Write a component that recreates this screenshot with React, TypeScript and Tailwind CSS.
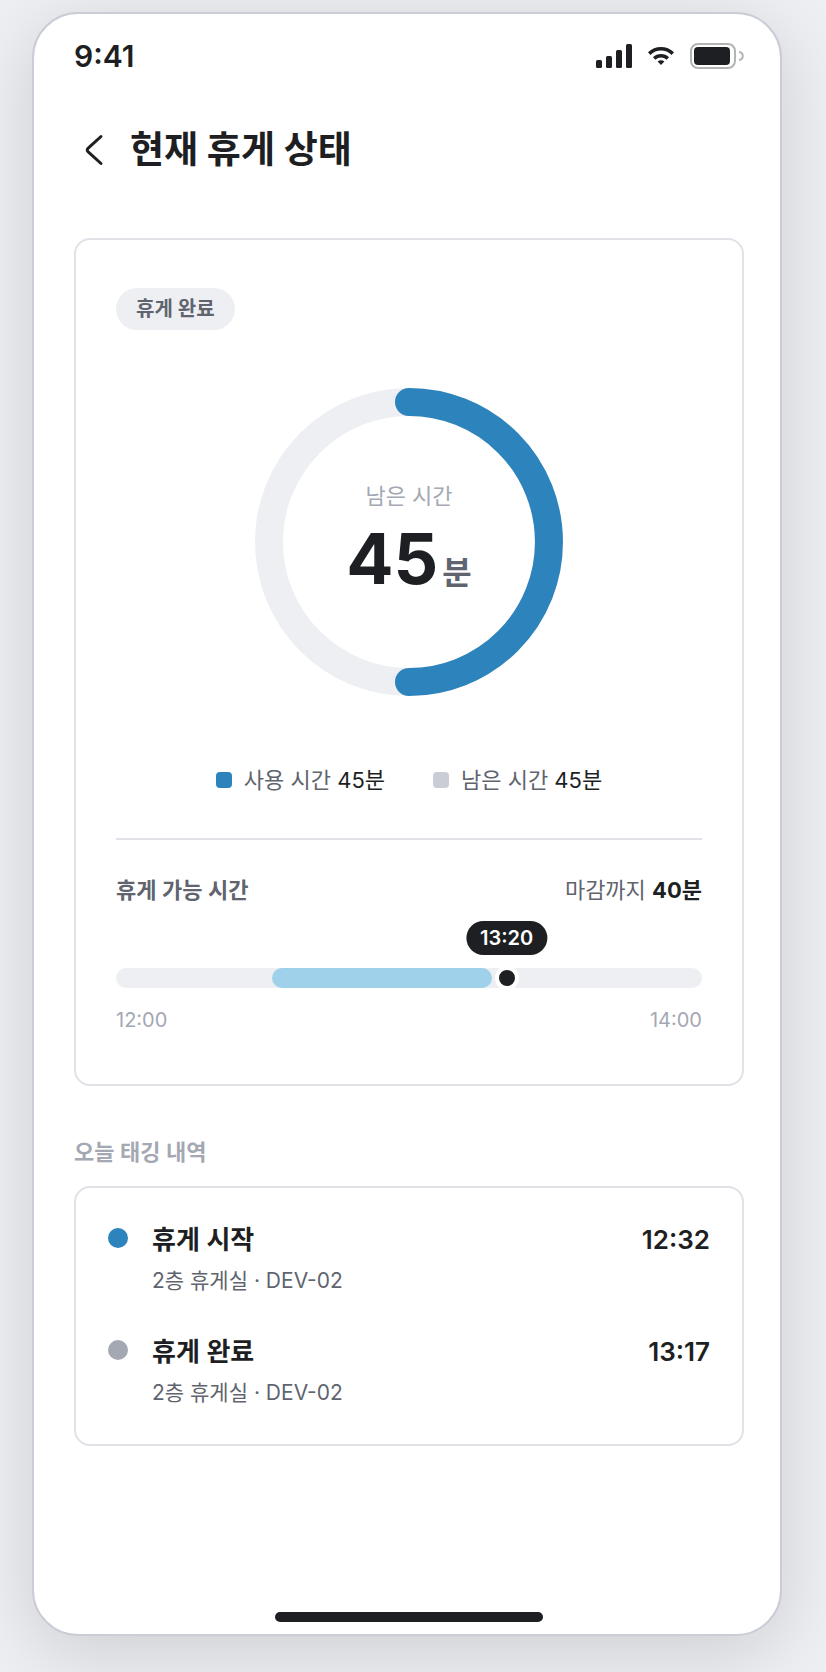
import React from 'react';

interface TagLog {
  label: string;
  place: string;
  time: string;
  dot: string;
}

const logs: TagLog[] = [
  { label: '휴게 시작', place: '2층 휴게실 · DEV-02', time: '12:32', dot: 'bg-[#2d83bc]' },
  { label: '휴게 완료', place: '2층 휴게실 · DEV-02', time: '13:17', dot: 'bg-[#a4a8b2]' },
];

// Minutes counted from 12:00 to 14:00
const windowMinutes = 120;
const usedFrom = 32;
const usedTo = 77;
const now = 80;

const percent = (minutes: number) => `${(minutes / windowMinutes) * 100}%`;

const StatusBar = () => (
  <div className="flex items-center justify-between h-[84px] pl-10 pr-9">
    <span className="text-[30px] leading-9 font-semibold">9:41</span>
    <div className="flex items-center gap-4">
      <svg width="36" height="24" viewBox="0 0 36 24" fill="currentColor" aria-hidden="true">
        <rect x="0" y="16" width="6" height="8" rx="1.5" />
        <rect x="10" y="12" width="6" height="12" rx="1.5" />
        <rect x="20" y="6" width="6" height="18" rx="1.5" />
        <rect x="30" y="0" width="6" height="24" rx="1.5" />
      </svg>
      <svg width="26" height="18" viewBox="0 0 26 18" fill="none" stroke="currentColor" strokeWidth="3.6" aria-hidden="true">
        <path d="M1.2 6.6C8 .2 18 .2 24.8 6.6" />
        <path d="M6.2 11.5C10 7.9 16 7.9 19.8 11.5" />
        <path d="M9.6 14.5C11.5 12.8 14.5 12.8 16.4 14.5L13 18Z" fill="currentColor" stroke="none" />
      </svg>
      <svg width="54" height="26" viewBox="0 0 54 26" fill="none" aria-hidden="true">
        <rect x="1" y="1" width="44" height="24" rx="7" stroke="#b4b4b6" strokeWidth="2" />
        <rect x="4" y="4" width="36" height="18" rx="4" fill="currentColor" />
        <path d="M49 9C54 9.5 54 16.5 49 17" stroke="#b4b4b6" strokeWidth="2" />
      </svg>
    </div>
  </div>
);

const BreakRing = () => (
  <div className="grid place-items-center mt-[58px]">
    <svg
      width="308"
      height="308"
      viewBox="0 0 308 308"
      fill="none"
      strokeWidth="28"
      className="col-start-1 row-start-1"
      aria-hidden="true"
    >
      <circle cx="154" cy="154" r="140" stroke="#eeeff3" />
      <path d="M154 14A140 140 0 0 1 154 294" stroke="#2d83bc" strokeLinecap="round" />
    </svg>
    <div className="col-start-1 row-start-1 pt-4 text-center">
      <p className="text-[22px] leading-8 text-[#a4a8b2]">남은 시간</p>
      <p className="flex items-baseline justify-center gap-1 leading-[94px]">
        <strong className="text-[70px] font-bold">45</strong>
        <span className="text-[32px] font-semibold text-[#5f646e]">분</span>
      </p>
    </div>
  </div>
);

const LegendItem = ({ color, label, value }: { color: string; label: string; value: string }) => (
  <li className="flex items-center gap-3">
    <span className={`size-4 rounded ${color}`} />
    <span className="text-[#5f646e]">
      {label} <span className="text-[#1e1f23]">{value}</span>
    </span>
  </li>
);

const Timeline = () => (
  <div className="pt-8">
    <div className="flex items-center justify-between text-[22px] leading-9">
      <h2 className="font-semibold text-[#5f646e]">휴게 가능 시간</h2>
      <p className="text-[#5f646e]">
        마감까지 <strong className="font-bold text-[#1e1f23]">40분</strong>
      </p>
    </div>

    <div className="relative mt-[60px] h-5 rounded-full bg-[#eeeff3]">
      <div
        className="absolute inset-y-0 rounded-full bg-[#9fd1ea]"
        style={{ left: percent(usedFrom), width: percent(usedTo - usedFrom) }}
      />
      {/* Current time marker */}
      <div className="absolute inset-y-0 flex items-center" style={{ left: percent(now) }}>
        <span className="size-6 -translate-x-1/2 rounded-full border-4 border-white bg-[#1e1f23]" />
        <span className="absolute bottom-full left-0 -translate-x-1/2 mb-[13px] rounded-full bg-[#1e1f23] px-[14px] text-xl leading-[34px] font-semibold text-white">
          13:20
        </span>
      </div>
    </div>

    <div className="flex justify-between mt-4 text-xl leading-8 text-[#a4a8b2]">
      <span>12:00</span>
      <span>14:00</span>
    </div>
  </div>
);

export default function App() {
  return (
    <div className="flex min-h-screen bg-[#eeeff3] pt-3 pb-9 pl-8 pr-11 font-['Inter','Noto_Sans_CJK_KR',sans-serif] text-[#1e1f23]">
      <div className="flex flex-1 flex-col rounded-[46px] border-2 border-[#cbcdd6] bg-white shadow-[0_16px_72px_rgba(0,0,0,0.14)]">
        <StatusBar />

        <header className="flex items-center gap-4 pt-6 pl-10 pr-9">
          <button type="button" aria-label="뒤로" className="grid size-10 place-items-center">
            <svg width="40" height="40" viewBox="0 0 40 40" fill="none" stroke="currentColor" strokeWidth="3" strokeLinecap="round" strokeLinejoin="round" aria-hidden="true">
              <path d="M27 6.5L14.2 18.2Q12.2 20 14.2 21.8L27 33.5" />
            </svg>
          </button>
          <h1 className="text-[37px] leading-[56px] font-bold">현재 휴게 상태</h1>
        </header>

        <main className="flex-1 pt-[60px] pl-10 pr-9">
          <section className="rounded-2xl border-2 border-[#e1e1e7] px-10 pt-12 pb-12">
            <span className="inline-block rounded-full bg-[#eeeff3] px-5 text-xl leading-[42px] font-semibold text-[#5f646e] align-top">
              휴게 완료
            </span>
            <BreakRing />
            <ul className="flex justify-center gap-12 mt-[66px] pb-10 border-b-2 border-[#e1e1e7] text-[22px] leading-9">
              <LegendItem color="bg-[#2d83bc]" label="사용 시간" value="45분" />
              <LegendItem color="bg-[#cbcdd6]" label="남은 시간" value="45분" />
            </ul>
            <Timeline />
          </section>

          <h2 className="mt-12 mb-4 text-[22px] leading-9 font-semibold text-[#a4a8b2]">오늘 태깅 내역</h2>
          <ul className="flex flex-col gap-[30px] rounded-2xl border-2 border-[#e1e1e7] px-8 pt-8 pb-[30px]">
            {logs.map((log) => (
              <li key={log.time} className="flex gap-6">
                <span className={`mt-2 size-5 rounded-full ${log.dot}`} />
                <div className="flex-1">
                  <p className="text-[26px] leading-10 font-semibold">{log.label}</p>
                  <p className="text-[21px] leading-[42px] text-[#5f646e]">{log.place}</p>
                </div>
                <time className="text-[26px] leading-10 font-semibold">{log.time}</time>
              </li>
            ))}
          </ul>
        </main>

        <div className="flex justify-center pl-1 pb-3">
          <div className="h-[10px] w-[268px] rounded-full bg-[#1e1f23]" />
        </div>
      </div>
    </div>
  );
}
